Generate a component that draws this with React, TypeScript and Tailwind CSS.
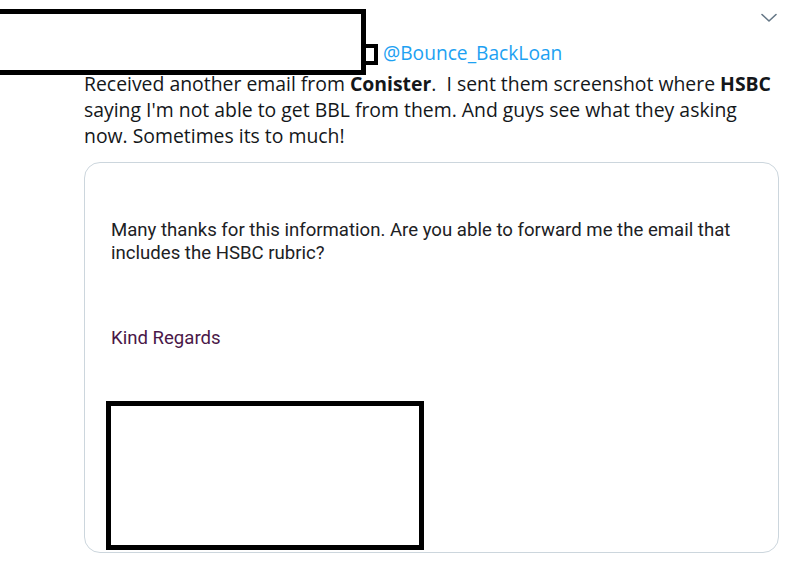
import React from "react";

const Chevron = () => (
  <svg width="18" height="12" viewBox="0 0 18 12" fill="none">
    <path d="M2 2.5 L9 9 L16 2.5" stroke="#657786" strokeWidth="1.6" strokeLinecap="round" strokeLinejoin="round" />
  </svg>
);

export default function App() {
  return (
    <div className="relative w-[792px] h-[565px] overflow-hidden bg-white font-['Open_Sans','Noto_Sans',sans-serif]">
      {/* redacted name + avatar */}
      <div className="absolute left-[-10px] top-[9px] w-[376px] h-[66px] border-[5px] border-black bg-white" />
      <div className="absolute left-[362px] top-[44px] w-[16px] h-[21px] border-[4px] border-black bg-white" />

      <div className="pl-[84px] pr-[14px] pt-[12px]">
        <div className="flex justify-end h-[28px]">
          <Chevron />
        </div>
        <div className="pl-[299px] text-[19.2px] leading-[26px] text-[#1da1f2]">@Bounce_BackLoan</div>
        <p className="mt-[5px] text-[19.4px] leading-[26px] text-[#14171a]">
          Received another email from <b>Conister</b>.&nbsp; I sent them screenshot where <b>HSBC</b> saying I'm not
          able to get BBL from them. And guys see what they asking now. Sometimes its to much!
        </p>

        <div className="mt-[13px] w-[695px] h-[391px] rounded-[16px] border border-[#ccd6dd] px-[26px] pt-[56px] font-['Roboto',sans-serif]">
          <p className="text-[18.6px] leading-[23px] text-[#202124]">
            Many thanks for this information. Are you able to forward me the email that includes the HSBC rubric?
          </p>
          <p className="mt-[62px] text-[18.6px] leading-[23px] text-[#4a1848]">Kind Regards</p>
          <div className="mt-[51px] ml-[-5px] w-[318px] h-[149px] border-[5px] border-black" />
        </div>
      </div>
    </div>
  );
}
